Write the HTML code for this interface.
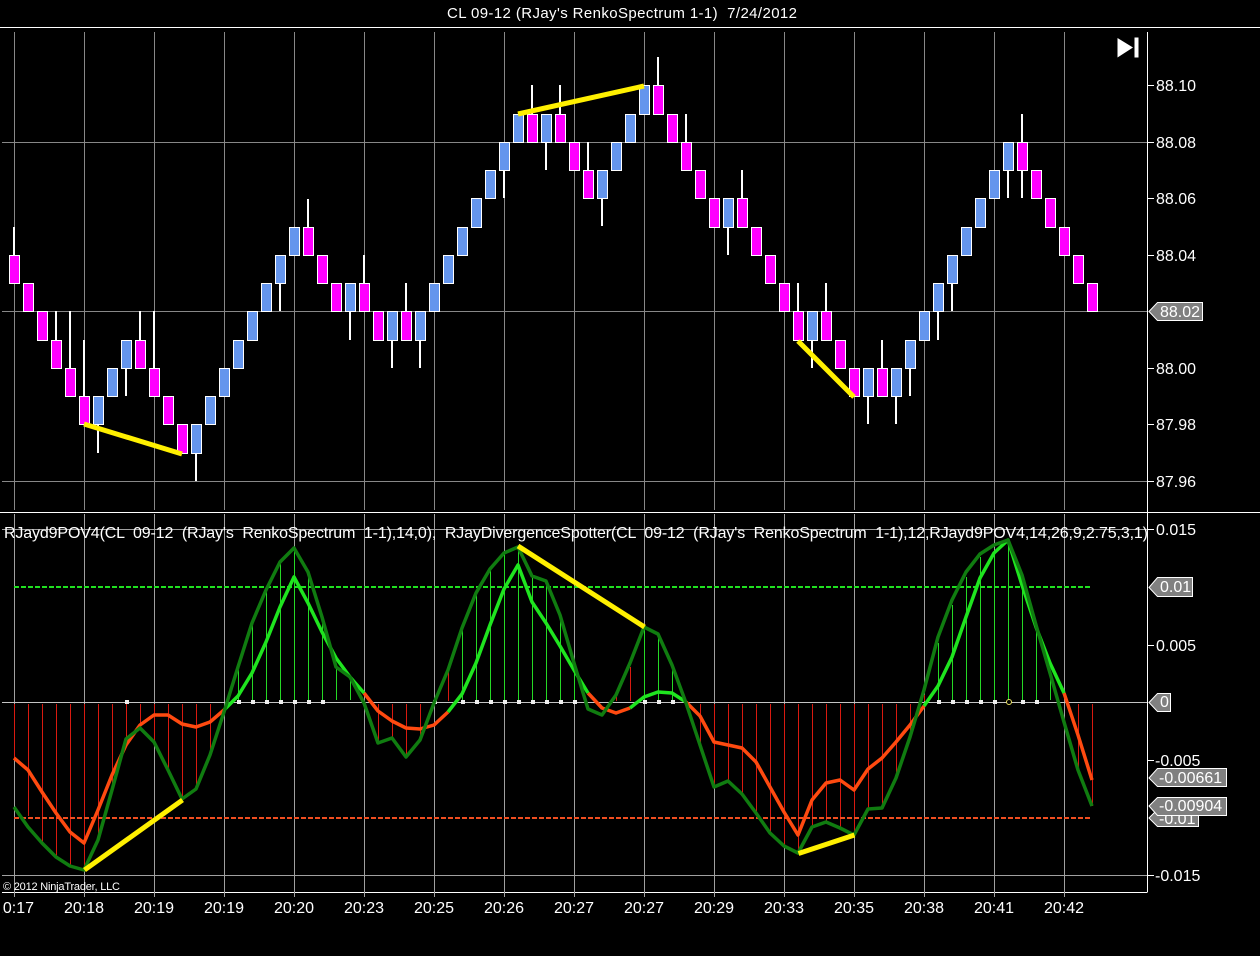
<!DOCTYPE html>
<html><head><meta charset="utf-8"><title>CL 09-12</title>
<style>html,body{margin:0;padding:0;background:#000;width:1260px;height:956px;overflow:hidden}svg{display:block}text{font-family:"Liberation Sans",sans-serif;fill:#fff;white-space:pre}</style></head>
<body>
<svg width="1260" height="956" viewBox="0 0 1260 956" xmlns="http://www.w3.org/2000/svg" xml:space="preserve">
<rect width="1260" height="956" fill="#000"/>
<!-- frame -->
<path d="M0 27.5H1260M0 512.5H1260M2 892.5H1147.5M1147.5 32V892" stroke="#fff" fill="none"/>
<!-- top grid -->
<path d="M14.5 32V510M84.5 32V510M154.5 32V510M224.5 32V510M294.5 32V510M364.5 32V510M434.5 32V510M504.5 32V510M574.5 32V510M644.5 32V510M714.5 32V510M784.5 32V510M854.5 32V510M924.5 32V510M994.5 32V510M1064.5 32V510M2 142.5H1147M2 311.5H1147M2 481.5H1147" stroke="#878787" fill="none"/>
<!-- lower grid -->
<path d="M14.5 514V897M84.5 514V897M154.5 514V897M224.5 514V897M294.5 514V897M364.5 514V897M434.5 514V897M504.5 514V897M574.5 514V897M644.5 514V897M714.5 514V897M784.5 514V897M854.5 514V897M924.5 514V897M994.5 514V897M1064.5 514V897M2 529.5H1147M2 875.5H1147" stroke="#a0a0a0" fill="none"/>
<path d="M2 702.5H1147" stroke="#c4c4c4" fill="none"/>
<!-- wicks -->
<path d="M14 227V255M56 311V340M70 311V368M84 340V396M98 424V453M126 368V396M140 311V340M154 311V368M196 453V481M280 283V311M308 199V227M350 311V340M364 255V283M392 340V368M406 283V311M420 340V368M504 170V198M532 85V114M546 142V170M560 85V114M588 142V170M602 198V226M658 57V85M686 114V142M728 227V255M742 170V198M798 283V311M812 340V368M826 283V311M868 396V424M882 340V368M896 396V424M910 368V396M938 311V340M952 283V311M1008 170V198M1022 114V142M1022 170V198" stroke="#fff" stroke-width="2" fill="none"/>
<!-- magenta bricks -->
<path fill="#ff00ff" stroke="#fff" d="M9.5 255.5h10V283.5h-10zM23.5 283.5h10V311.5h-10zM37.5 311.5h10V340.5h-10zM51.5 340.5h10V368.5h-10zM65.5 368.5h10V396.5h-10zM79.5 396.5h10V424.5h-10zM135.5 340.5h10V368.5h-10zM149.5 368.5h10V396.5h-10zM163.5 396.5h10V424.5h-10zM177.5 424.5h10V453.5h-10zM303.5 227.5h10V255.5h-10zM317.5 255.5h10V283.5h-10zM331.5 283.5h10V311.5h-10zM359.5 283.5h10V311.5h-10zM373.5 311.5h10V340.5h-10zM401.5 311.5h10V340.5h-10zM527.5 114.5h10V142.5h-10zM555.5 114.5h10V142.5h-10zM569.5 142.5h10V170.5h-10zM583.5 170.5h10V198.5h-10zM653.5 85.5h10V114.5h-10zM667.5 114.5h10V142.5h-10zM681.5 142.5h10V170.5h-10zM695.5 170.5h10V198.5h-10zM709.5 198.5h10V227.5h-10zM737.5 198.5h10V227.5h-10zM751.5 227.5h10V255.5h-10zM765.5 255.5h10V283.5h-10zM779.5 283.5h10V311.5h-10zM793.5 311.5h10V340.5h-10zM821.5 311.5h10V340.5h-10zM835.5 340.5h10V368.5h-10zM849.5 368.5h10V396.5h-10zM877.5 368.5h10V396.5h-10zM1017.5 142.5h10V170.5h-10zM1031.5 170.5h10V198.5h-10zM1045.5 198.5h10V227.5h-10zM1059.5 227.5h10V255.5h-10zM1073.5 255.5h10V283.5h-10zM1087.5 283.5h10V311.5h-10z"/>
<!-- blue bricks -->
<path fill="#6495ed" stroke="#fff" d="M93.5 396.5h10V424.5h-10zM107.5 368.5h10V396.5h-10zM121.5 340.5h10V368.5h-10zM191.5 424.5h10V453.5h-10zM205.5 396.5h10V424.5h-10zM219.5 368.5h10V396.5h-10zM233.5 340.5h10V368.5h-10zM247.5 311.5h10V340.5h-10zM261.5 283.5h10V311.5h-10zM275.5 255.5h10V283.5h-10zM289.5 227.5h10V255.5h-10zM345.5 283.5h10V311.5h-10zM387.5 311.5h10V340.5h-10zM415.5 311.5h10V340.5h-10zM429.5 283.5h10V311.5h-10zM443.5 255.5h10V283.5h-10zM457.5 227.5h10V255.5h-10zM471.5 198.5h10V227.5h-10zM485.5 170.5h10V198.5h-10zM499.5 142.5h10V170.5h-10zM513.5 114.5h10V142.5h-10zM541.5 114.5h10V142.5h-10zM597.5 170.5h10V198.5h-10zM611.5 142.5h10V170.5h-10zM625.5 114.5h10V142.5h-10zM639.5 85.5h10V114.5h-10zM723.5 198.5h10V227.5h-10zM807.5 311.5h10V340.5h-10zM863.5 368.5h10V396.5h-10zM891.5 368.5h10V396.5h-10zM905.5 340.5h10V368.5h-10zM919.5 311.5h10V340.5h-10zM933.5 283.5h10V311.5h-10zM947.5 255.5h10V283.5h-10zM961.5 227.5h10V255.5h-10zM975.5 198.5h10V227.5h-10zM989.5 170.5h10V198.5h-10zM1003.5 142.5h10V170.5h-10z"/>
<!-- yellow top -->
<path d="M84 424L182 454M518 114L644 86M798 341L854 397" stroke="#fff000" stroke-width="5" fill="none"/>
<!-- histogram -->
<path fill="none" stroke="#d81a10" d="M14.5 704V758M28.5 704V816M42.5 704V843M56.5 704V857M70.5 704V866M84.5 704V868M98.5 704V840M112.5 704V790M126.5 704V739M140.5 704V728M154.5 704V742M168.5 704V770M182.5 704V799M196.5 704V789M210.5 704V755M378.5 704V743M392.5 704V738M406.5 704V757M420.5 704V737M448.5 701V672M616.5 701V696M630.5 701V667M700.5 704V745M714.5 704V787M728.5 704V781M742.5 704V794M756.5 704V813M770.5 704V833M784.5 704V846M798.5 704V853M812.5 704V827M826.5 704V822M840.5 704V828M854.5 704V835M868.5 704V809M882.5 704V808M896.5 704V778M910.5 704V737M924.5 701V695M1078.5 704V770M1092.5 704V806"/>
<path fill="none" stroke="#25d825" d="M238.5 700V670M252.5 700V625M266.5 700V590M280.5 700V562M294.5 700V548M308.5 700V572M322.5 700V617M336.5 700V667M350.5 700V677M462.5 700V628M476.5 700V593M490.5 700V569M504.5 700V553M518.5 700V547M532.5 700V576M546.5 700V581M560.5 700V615M574.5 700V663M644.5 700V627M658.5 700V634M672.5 700V665M938.5 700V643M952.5 700V605M966.5 700V577M980.5 700V557M994.5 700V553M1008.5 700V540M1022.5 700V577M1036.5 700V627M1050.5 700V677"/>
<!-- zero dots -->
<path fill="#eee" d="M125 700h4v4h-4zM237 700h4v4h-4zM251 700h4v4h-4zM265 700h4v4h-4zM279 700h4v4h-4zM293 700h4v4h-4zM307 700h4v4h-4zM321 700h4v4h-4zM433 700h4v4h-4zM461 700h4v4h-4zM475 700h4v4h-4zM489 700h4v4h-4zM503 700h4v4h-4zM517 700h4v4h-4zM531 700h4v4h-4zM545 700h4v4h-4zM559 700h4v4h-4zM573 700h4v4h-4zM643 700h4v4h-4zM657 700h4v4h-4zM671 700h4v4h-4zM937 700h4v4h-4zM951 700h4v4h-4zM965 700h4v4h-4zM979 700h4v4h-4zM993 700h4v4h-4zM1021 700h4v4h-4zM1035 700h4v4h-4z"/>
<circle cx="1009" cy="702" r="2.5" fill="#000" stroke="#e8e060"/>
<!-- dashed levels -->
<path d="M14 587H1092" stroke="#20e020" stroke-width="2" stroke-dasharray="5 2" fill="none"/>
<path d="M14 818H1092" stroke="#f04e20" stroke-width="2" stroke-dasharray="5 2" fill="none"/>
<!-- signal -->
<g fill="none" stroke-width="3.5" stroke-linejoin="round">
<g stroke="#ff4a10">
<polyline points="14,758 28,770 42,792 56,813 70,832 84,843 98,810 112,775 126,745 140,725 154,715 168,715 182,724 196,727 210,722 224,710"/>
<polyline points="364,693 378,711 392,721 406,728 420,729 434,725 448,712"/>
<polyline points="588,693 602,708 616,713 630,708"/>
<polyline points="686,702 700,716 714,742 728,745 742,748 756,762 770,787 784,812 798,835 812,800 826,783 840,780 854,790 868,769 882,758 896,742 910,725 924,706"/>
<polyline points="1064,693 1078,735 1092,780"/>
</g>
<g stroke="#1fe51f">
<polyline points="224,710 238,696 252,673 266,642 280,607 294,577 308,603 322,632 336,658 350,677 364,693"/>
<polyline points="448,712 462,694 476,663 490,625 504,589 518,565 532,602 546,623 560,646 574,670 588,693"/>
<polyline points="630,708 644,697 658,692 672,693 686,702"/>
<polyline points="924,706 938,686 952,657 966,617 980,578 994,553 1008,540 1022,585 1036,627 1050,663 1064,693"/>
</g>
<polyline stroke="#107c10" points="14,807 28,827 42,843 56,857 70,866 84,870 98,840 112,790 126,739 140,728 154,742 168,770 182,799 196,789 210,755 224,712 238,667 252,623 266,590 280,562 294,548 308,572 322,617 336,667 350,677 364,703 378,743 392,738 406,757 420,740 434,703 448,670 462,628 476,593 490,569 504,553 518,547 532,576 546,581 560,615 574,663 588,709 602,715 616,695 630,663 644,627 658,634 672,665 686,703 700,745 714,787 728,781 742,794 756,813 770,833 784,846 798,853 812,827 826,822 840,828 854,835 868,809 882,808 896,778 910,737 924,690 938,637 952,600 966,572 980,554 994,545 1008,540 1022,575 1036,625 1050,673 1064,722 1078,770 1092,806"/>
</g>
<!-- yellow lower -->
<path d="M84.5 870L182.5 800M518 546L644.5 627M798.5 853.5L854.5 835" stroke="#fff000" stroke-width="5" fill="none"/>
<!-- title and legend -->
<text x="447" y="18" font-size="15" textLength="350" lengthAdjust="spacing">CL 09-12 (RJay's RenkoSpectrum 1-1)  7/24/2012</text>
<text x="4" y="538" font-size="16" textLength="1144" lengthAdjust="spacing">RJayd9POV4(CL  09-12  (RJay's  RenkoSpectrum  1-1),14,0),  RJayDivergenceSpotter(CL  09-12  (RJay's  RenkoSpectrum  1-1),12,RJayd9POV4,14,26,9,2.75,3,1)</text>
<text x="3" y="890" font-size="11" textLength="117" lengthAdjust="spacing">© 2012 NinjaTrader, LLC</text>
<!-- play icon -->
<path d="M1117.5 38L1133 47.5L1117.5 57.5zM1134.5 37.5h4v20h-4z" fill="#fff"/>
<!-- axis ticks -->
<path d="M1148 85.5h6M1148 142.5h6M1148 198.5h6M1148 255.5h6M1148 368.5h6M1148 424.5h6M1148 481.5h6M1148 529.5h6M1148 645.5h6M1148 760.5h6M1148 875.5h6" stroke="#fff" fill="none"/>
<g font-size="16">
<text x="1156" y="91">88.10</text>
<text x="1156" y="148">88.08</text>
<text x="1156" y="204">88.06</text>
<text x="1156" y="261">88.04</text>
<text x="1156" y="374">88.00</text>
<text x="1156" y="430">87.98</text>
<text x="1156" y="487">87.96</text>
<text x="1156" y="535">0.015</text>
<text x="1156" y="651">0.005</text>
<text x="1155" y="766">-0.005</text>
<text x="1155" y="881">-0.015</text>
</g>
<!-- tags -->
<path d="M1149 311.5L1157.5 302.5H1202.5V320.5H1157.5z" fill="#808080" stroke="#fff" stroke-width="1"/>
<path d="M1149 587.5L1157.5 577.5H1192.5V596.5H1157.5z" fill="#808080" stroke="#fff" stroke-width="1"/>
<path d="M1149 702.5L1157.5 693.5H1170.5V711.5H1157.5z" fill="#808080" stroke="#fff" stroke-width="1"/>
<path d="M1149 818L1157.5 809.5H1198.5V826.5H1157.5z" fill="#808080" stroke="#fff" stroke-width="1"/>
<path d="M1149 778L1157.5 768.5H1226.5V786.5H1157.5z" fill="#808080" stroke="#fff" stroke-width="1"/>
<g font-size="16">
<text x="1160" y="317">88.02</text>
<text x="1160" y="592">0.01</text>
<text x="1160" y="707">0</text>
<text x="1159" y="824">-0.01</text>
<text x="1159" y="783">-0.00661</text>
</g>
<path d="M1149 806L1157.5 797.5H1226.5V815.5H1157.5z" fill="#808080" stroke="#fff" stroke-width="1"/>
<text x="1159" y="811" font-size="16">-0.00904</text>
<!-- x labels -->
<g font-size="16" text-anchor="middle">
<text x="14" y="913">20:17</text>
<text x="84" y="913">20:18</text>
<text x="154" y="913">20:19</text>
<text x="224" y="913">20:19</text>
<text x="294" y="913">20:20</text>
<text x="364" y="913">20:23</text>
<text x="434" y="913">20:25</text>
<text x="504" y="913">20:26</text>
<text x="574" y="913">20:27</text>
<text x="644" y="913">20:27</text>
<text x="714" y="913">20:29</text>
<text x="784" y="913">20:33</text>
<text x="854" y="913">20:35</text>
<text x="924" y="913">20:38</text>
<text x="994" y="913">20:41</text>
<text x="1064" y="913">20:42</text>
</g>
<rect x="0" y="895" width="2" height="25" fill="#000"/>
</svg>
</body></html>
